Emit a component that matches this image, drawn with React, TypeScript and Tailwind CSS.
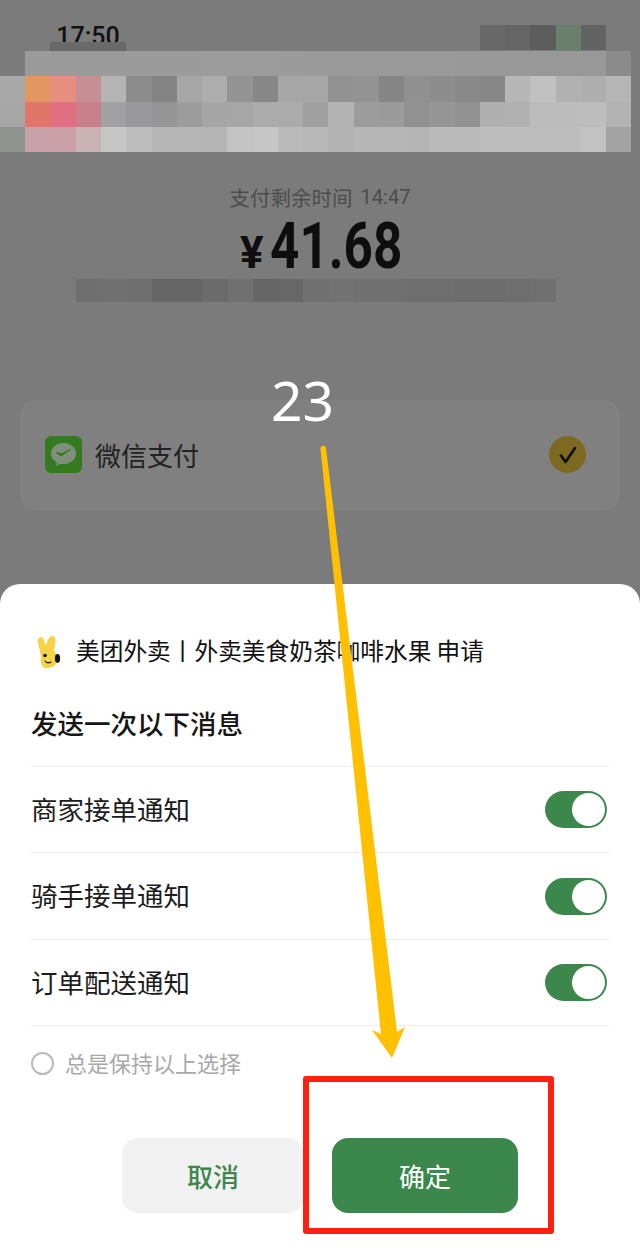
import clsx from "clsx";

const fontStack = "font-['Noto_Sans_CJK_SC','Noto_Sans',sans-serif]";

const mosaicRows = [
  ["#7b7b7b", "#9b9b9b", "#9b9b9b", "#9b9b9b", "#9b9b9b", "#9b9b9b", "#9b9b9b", "#9b9b9b", "#9c9c9c", "#9c9c9c", "#9c9c9c", "#9b9b9b", "#9a9a9a", "#9a9a9a", "#9a9a9a", "#9a9a9a", "#9a9a9a", "#9a9a9a", "#999999", "#999999", "#999999", "#989898", "#989898", "#989898", "#8b8b8b"],
  ["#a9a9a9", "#e1975f", "#e68f80", "#c78f94", "#b4b4b4", "#8c8c8c", "#848484", "#a6a6a6", "#adadad", "#939393", "#878787", "#a6a6a6", "#a6a6a6", "#929292", "#939393", "#858585", "#909090", "#8d8d8d", "#888888", "#878787", "#b7b7b7", "#c1c1c1", "#b1b1b1", "#aeaeae", "#b6b6b6"],
  ["#a7a7a7", "#e0756a", "#e06f81", "#c9808b", "#a1a1a5", "#98989c", "#959595", "#9c9c9c", "#a5a5a5", "#a6a6a6", "#ababab", "#ababab", "#a0a0a0", "#b3b3b3", "#9c9c9c", "#9b9b9b", "#919191", "#959595", "#929292", "#b0b0b0", "#b1b1b1", "#bbbbbb", "#bcbcbc", "#bdbdbd", "#b3b3b3"],
  ["#8f9390", "#c9a1a9", "#c9a0a8", "#c9b3b5", "#c6c6c6", "#bebebe", "#b6b6b6", "#b7b7b7", "#b5b5b5", "#c4c4c4", "#c6c6c6", "#bababa", "#b8b8b8", "#b3b3b3", "#b6b6b6", "#b6b6b6", "#b4b4b4", "#bababa", "#b9b9b9", "#bdbdbd", "#bdbdbd", "#bdbdbd", "#bdbdbd", "#c2c2c2", "#a3a3a3"],
];

const signalCells = ["#686868", "#656565", "#5d5d5d", "#6b7f6d", "#636363"];
const nameCells = ["#6f6f6f", "#707070", "#6f6f6f", "#666666", "#666666", "#6b6b6b", "#707070", "#666666", "#676767", "#707070", "#727272", "#707070", "#707070", "#6e6e6e", "#6e6e6e", "#6c6c6c", "#6c6c6c", "#6e6e6e", "#707070"];
const notices = ["商家接单通知", "骑手接单通知", "订单配送通知"];

function Toggle() {
  return (
    <span className="mr-[2px] flex h-[37px] w-[62px] items-center justify-end rounded-full bg-[#3c874c] pr-[2px]">
      <span className="h-[33px] w-[33px] rounded-full bg-white" />
    </span>
  );
}

function WeChatIcon() {
  return (
    <svg viewBox="0 0 37 37" className="h-[37px] w-[37px] shrink-0" aria-hidden="true">
      <rect width="37" height="37" rx="6" fill="#347a1e" />
      <ellipse cx="18.5" cy="17.5" rx="12.5" ry="10.5" fill="#7f8f7c" />
      <path d="M12 25l-1 5 6-3z" fill="#7f8f7c" />
      <path d="M11 16.500l5 3.500 9.500-6.500-9 4.300z" fill="#347a1e" stroke="#347a1e" strokeWidth="1" strokeLinejoin="round" />
    </svg>
  );
}

function MeituanIcon() {
  return (
    <svg viewBox="0 0 28 34" className="h-[34px] w-[28px] shrink-0" aria-hidden="true">
      <path d="M4 9C2 3 8-1 10 5l2 6c1-5 3-10 6-10 4 0 4 5 3 9l-1 6c3 2 4 6 3 10-1 5-5 7-10 7-4 0-6-2-6-6 0-6-1-12-3-18z" fill="#f6d349" />
      <ellipse cx="23.500" cy="23.500" rx="2.600" ry="4.400" fill="#111111" />
      <circle cx="11" cy="20.500" r="1.800" fill="#111111" />
      <path d="M11 26c1.500 2 4 2.300 6 1" fill="none" stroke="#111111" strokeWidth="1.100" strokeLinecap="round" />
    </svg>
  );
}

export default function App() {
  return (
    <div className={clsx("relative flex h-[1246px] w-[640px] flex-col overflow-hidden bg-[#7b7b7b]", fontStack)}>
      <div className="flex h-[51px] items-start justify-between pt-[25px]">
        <div className="ml-[50px] flex w-[76px] flex-col items-center">
          <span className="h-[17px] font-['Roboto',sans-serif] text-[25px] leading-[24px] font-medium text-[#111111]">
            17:50
          </span>
          <span className="relative h-[9px] w-full bg-[#696969]" />
        </div>
        <div className="mr-[34px] flex">
          {signalCells.map((color, index) => (
            <span key={index} className="h-[25px] w-[25.25px]" style={{ backgroundColor: color }} />
          ))}
        </div>
      </div>

      <div className="flex flex-col">
        {mosaicRows.map((row, rowIndex) => (
          <div key={rowIndex} className="flex h-[25.25px]">
            {row.map((color, cellIndex) => (
              <span key={cellIndex} className="w-[25.25px] shrink-0" style={{ backgroundColor: color }} />
            ))}
          </div>
        ))}
      </div>

      <div className="mt-[32px] mb-[1px] flex items-center justify-center gap-[8px] text-[20.500px] leading-[26px] text-[#4c4c4c]">
        <span>支付剩余时间</span>
        <span className="font-['Roboto',sans-serif] text-[20px]">14:47</span>
      </div>

      <div className="mt-[2px] flex h-[64px] items-center pt-[3px] pl-[240px] font-['Roboto',sans-serif] font-bold text-[#0e0e0e]">
        <span className="mt-[12px] w-[30px] shrink-0 text-[44px] leading-none">¥</span>
        <span className="w-[130px] origin-left scale-x-[0.8] text-[64px] leading-none">41.68</span>
      </div>

      <div className="mt-[2px] ml-[76px] flex h-[23px] w-[480px]">
        {nameCells.map((color, index) => (
          <span key={index} className="w-[25.25px] shrink-0" style={{ backgroundColor: color }} />
        ))}
      </div>

      <div className="mx-[20px] mt-[98px] flex h-[110px] items-start justify-between rounded-[16px] bg-[#808080] pt-[36px] pr-[34px] pl-[25px]">
        <div className="flex items-center gap-[13px]">
          <WeChatIcon />
          <span className="text-[26px] leading-[37px] text-[#222222]">微信支付</span>
        </div>
        <span className="flex h-[37px] w-[37px] items-center justify-center rounded-full bg-[#7d6a20]">
          <svg viewBox="0 0 20 20" className="h-[20px] w-[20px]" aria-hidden="true">
            <path d="M3 10.500l4.500 6.500 9.500-14" fill="none" stroke="#0f0f0f" strokeWidth="2.600" strokeLinecap="round" strokeLinejoin="round" />
          </svg>
        </span>
      </div>

      <div className="mt-[74px] flex flex-1 flex-col rounded-t-[20px] bg-white px-[31px] pt-[51px]">
        <div className="flex h-[34px] items-center gap-[14px] pl-[3px] text-[23.700px] text-[#111111]">
          <MeituanIcon />
          <span className="pb-[3px] whitespace-pre">美团外卖丨外卖美食奶茶咖啡水果 申请</span>
        </div>
        <p className="mt-[29px] mb-[18px] text-[26.500px] leading-[50px] font-medium text-[#161616]">发送一次以下消息</p>
        {notices.map((notice) => (
          <div key={notice} className="flex h-[86.400px] items-center justify-between border-t border-[#ececec] text-[26.500px] text-[#1c1c1c]">
            <span className="pb-[2px]">{notice}</span>
            <Toggle />
          </div>
        ))}
        <div className="flex h-[76px] items-center gap-[11px] border-t border-[#ececec] text-[22px] text-[#a8a8a8]">
          <span className="h-[23px] w-[23px] rounded-full border-2 border-[#b9b9b9]" />
          <span className="pb-[2px]">总是保持以上选择</span>
        </div>
        <div className="mt-[37px] ml-[91px] flex gap-[28px] text-[26px]">
          <button type="button" className="h-[75px] w-[182px] rounded-[16px] bg-[#f1f1f1] font-medium text-[#3c874c]">
            取消
          </button>
          <button type="button" className="h-[75px] w-[186px] rounded-[16px] bg-[#3c874c] text-white">
            确定
          </button>
        </div>
      </div>

      <span className="absolute top-[365px] left-[271px] font-['Noto_Sans',sans-serif] text-[55px] leading-[70px] text-white">23</span>
      <svg viewBox="0 0 640 1246" className="pointer-events-none absolute inset-0 h-[1246px] w-[640px]" aria-hidden="true">
        <path d="M320.500 449a2.700 2.700 0 0 1 5.500 -1L397 1032l8 -5-13 31-20 -28 9 4z" fill="#ffc000" />
      </svg>
      <div className="pointer-events-none absolute top-[1076px] left-[303px] h-[158px] w-[251px] rounded-[3px] border-[6px] border-[#ff2010]" />
    </div>
  );
}
